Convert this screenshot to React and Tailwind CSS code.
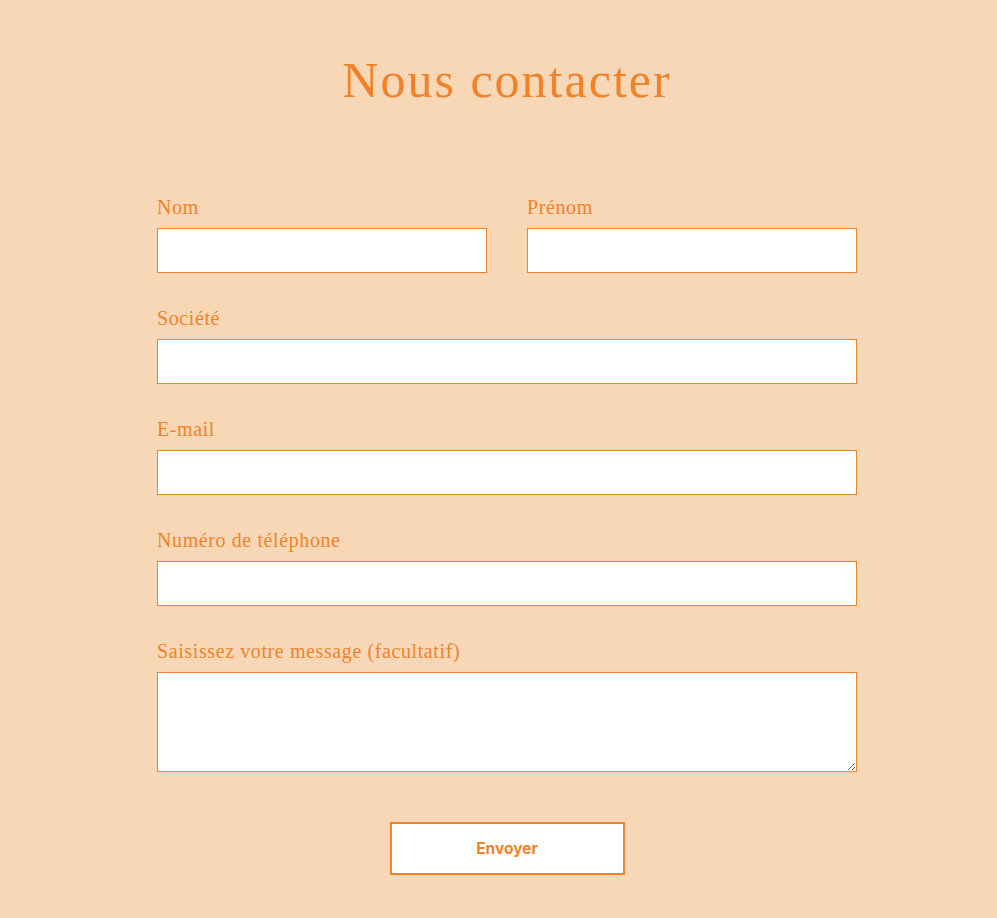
export default function App() {
  const serif = { fontFamily: '"Liberation Serif", "DejaVu Serif", serif' };

  const fields = [
    { id: "societe", label: "Société" },
    { id: "email", label: "E-mail" },
    { id: "tel", label: "Numéro de téléphone" },
  ];

  return (
    <div className="min-h-screen bg-[#f8d7b6] pb-[43px] pt-[51px]">
      <div className="ml-[157px] w-[700px]">
        <h1
          className="text-center text-[50px] leading-[58px] tracking-[2px] text-[#f0832a]"
          style={serif}
        >
          Nous contacter
        </h1>

        <form className="mt-[86px] flex flex-col gap-[33px]" style={serif}>
          <div className="grid grid-cols-2 gap-10">
            <Field id="nom" label="Nom" />
            <Field id="prenom" label="Prénom" />
          </div>

          {fields.map((f) => (
            <Field key={f.id} id={f.id} label={f.label} />
          ))}

          <div>
            <label
              htmlFor="message"
              className="mb-[9px] block text-[20px] leading-[24px] tracking-[0.6px] text-[#f0832a]"
            >
              Saisissez votre message (facultatif)
            </label>
            <textarea
              id="message"
              className="block h-[100px] w-full border border-[#f0832a] bg-white outline-none"
            />
          </div>

          <div className="mt-[17px] flex justify-center">
            <button
              type="button"
              className="h-[53px] w-[235px] border-2 border-[#f0832a] bg-white text-[15.5px] font-bold text-[#f0832a]"
              style={{ fontFamily: "Inter, sans-serif" }}
            >
              Envoyer
            </button>
          </div>
        </form>
      </div>
    </div>
  );
}

function Field({ id, label }) {
  return (
    <div>
      <label
        htmlFor={id}
        className="mb-[9px] block text-[20px] leading-[24px] tracking-[0.6px] text-[#f0832a]"
      >
        {label}
      </label>
      <input
        id={id}
        type="text"
        className="block h-[45px] w-full border border-[#f0832a] bg-white outline-none"
      />
    </div>
  );
}
